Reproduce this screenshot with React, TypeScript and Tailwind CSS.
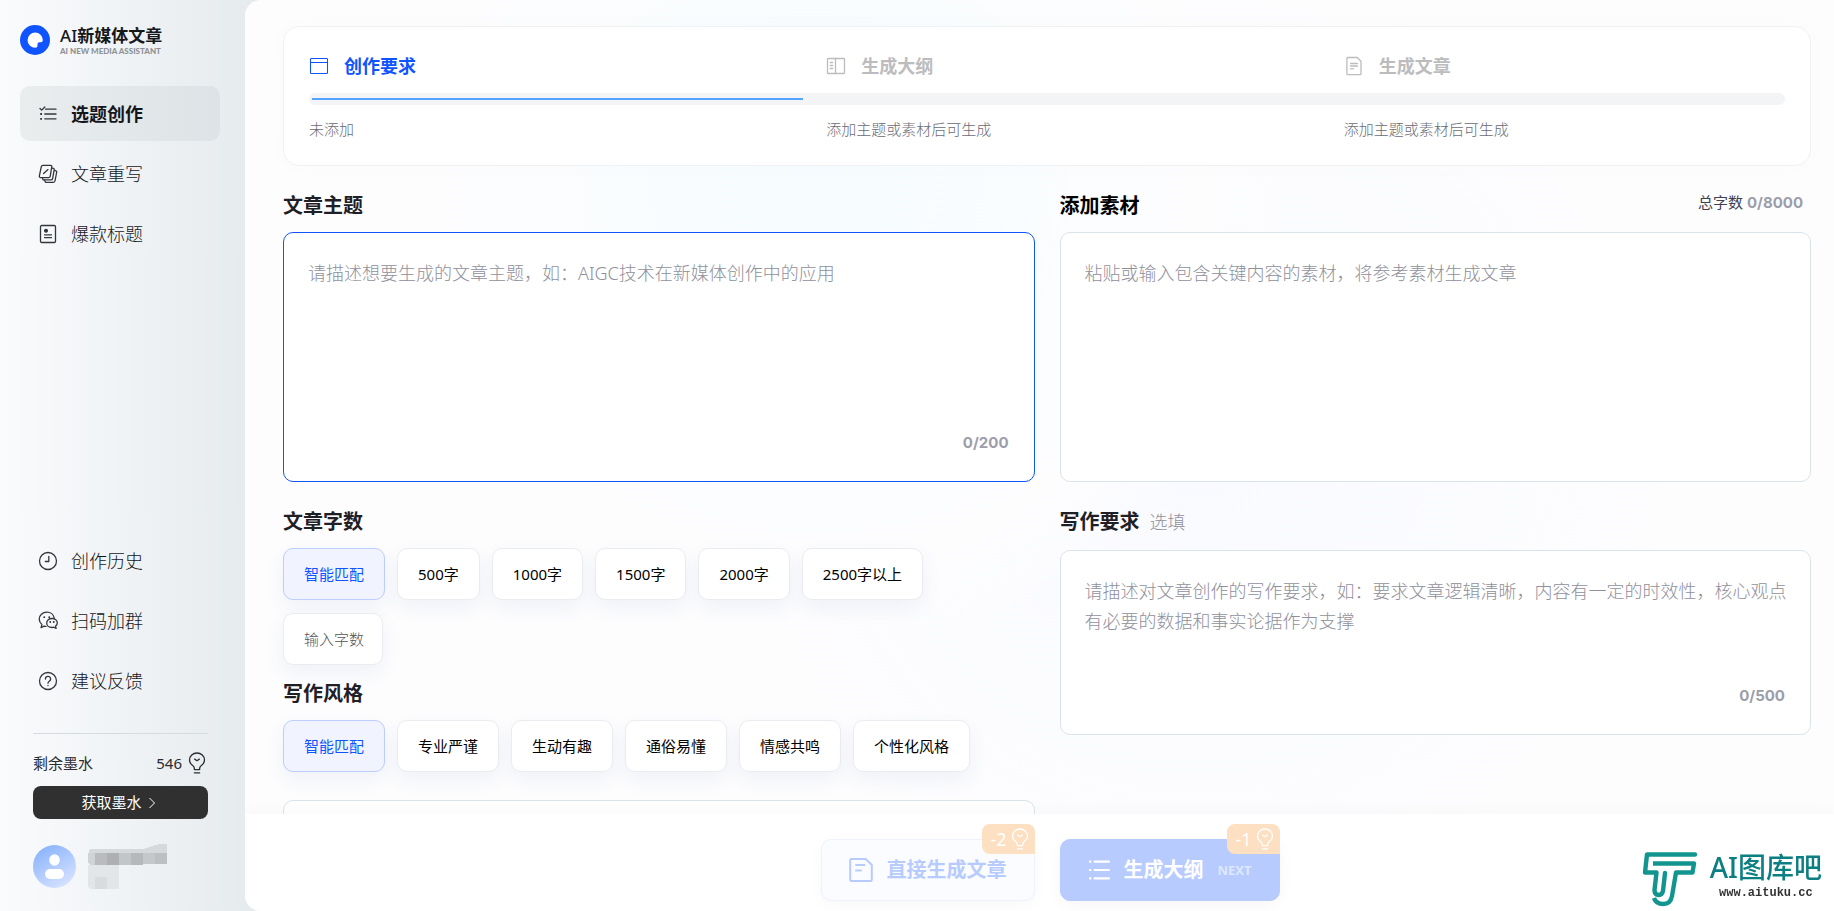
import { useState } from "react";
import type { ReactNode } from "react";
import clsx from "clsx";

type IconProps = { className?: string };

const Svg = ({
  className,
  box = 20,
  width = 1.3,
  children,
}: IconProps & { box?: number; width?: number; children: ReactNode }) => (
  <svg
    viewBox={`0 0 ${box} ${box}`}
    fill="none"
    stroke="currentColor"
    strokeWidth={width}
    strokeLinecap="round"
    strokeLinejoin="round"
    aria-hidden="true"
    className={className}
  >
    {children}
  </svg>
);

const ChecklistIcon = ({ className }: IconProps) => (
  <Svg className={className}>
    <path d="M2 4.5l1.7 1.6L6.8 3M7.5 5.2H18M6.8 10H18M6.8 14.8H18" />
    <path d="M2.200 10h1.800M2.200 14.800h1.800" strokeWidth="1.8" strokeLinecap="butt" />
  </Svg>
);

const RewriteIcon = ({ className }: IconProps) => (
  <Svg className={className}>
    <path d="M5 1.300h7.600a1.200 1.200 0 0 1 1.200 1.400l-1.600 9.600a1.600 1.600 0 0 1-1.600 1.300H2.500a1.200 1.200 0 0 1-1.200-1.400l2-9.600A1.700 1.700 0 0 1 5 1.300z" />
    <path d="M10 5.600L5.600 9.600" />
    <path d="M14.200 4.200l1.200.2a1 1 0 0 1 .8 1.200l-1.600 9a1.600 1.600 0 0 1-1.600 1.300H5.200l-.8-2" />
    <path d="M16.800 6.500l1.100.3a1 1 0 0 1 .8 1.200l-1.700 9a1.600 1.600 0 0 1-1.600 1.300H7.500l-.9-2" />
  </Svg>
);

const TitleIcon = ({ className }: IconProps) => (
  <Svg className={className}>
    <rect x="2.5" y="1.5" width="15" height="17" rx="1.2" />
    <path d="M6.5 10.800h7M6.5 13.600h7" />
    <circle cx="8" cy="6.8" r="1.4" fill="currentColor" />
  </Svg>
);

const ClockIcon = ({ className }: IconProps) => (
  <Svg className={className}>
    <circle cx="10" cy="10" r="8.5" />
    <path d="M10.8 5.5v5H7.3" />
  </Svg>
);

const WechatIcon = ({ className }: IconProps) => (
  <Svg className={className}>
    <path d="M16.300 7.200A7.500 7.500 0 0 0 8.800 1.200C4.600 1.200 1.200 4.300 1.200 8.100c0 2.200 1 4 2.700 5.300l-.8 3.300 2.900-1.600c.7.200 1.300.3 2 .3" />
    <path d="M14 7.500c-3 0-5.300 2-5.300 4.500s2.300 4.500 5.300 4.500c.7 0 1.300-.1 1.900-.3l2.200 1.200-.5-2.300c1-.8 1.700-1.900 1.700-3.100 0-2.500-2.300-4.500-5.300-4.500z" />
    <path d="M6.200 6.200h.1M11.200 6.200h.1M12.200 11h.1M15.700 11h.1" strokeWidth="1.8" />
  </Svg>
);

const HelpIcon = ({ className }: IconProps) => (
  <Svg className={className}>
    <circle cx="10" cy="10" r="8.5" />
    <path d="M7.400 8a2.600 2.600 0 1 1 3.900 2.200c-.8.500-1.300.9-1.300 2M10 14.400v.2" />
  </Svg>
);

const BulbIcon = ({ className }: IconProps) => (
  <Svg className={className} width={1.2}>
    <path d="M7.600 16v-1.200c0-1.200-.8-1.900-1.800-2.700a6.200 6.200 0 0 1-2.600-4.900a6.800 6.300 0 0 1 13.600 0a6.200 6.200 0 0 1-2.600 4.900c-1 .8-1.800 1.500-1.800 2.700V16z" />
    <path d="M7.600 18.900h4.800M7.900 6.500L10 7.900l2.100-1.400" />
  </Svg>
);

const WindowIcon = ({ className }: IconProps) => (
  <Svg className={className} width={1.1}>
    <rect x="1.5" y="2.5" width="17" height="15" rx="0.8" />
    <path d="M1.5 6.500h17" />
  </Svg>
);

const OutlineIcon = ({ className }: IconProps) => (
  <Svg className={className}>
    <rect x="1.5" y="2.5" width="17" height="15" rx="0.8" />
    <path d="M9.500 2.500v15M4.200 6.500h2.500M4.200 9.500h2.500M4.200 12.500h2.500" />
  </Svg>
);

const DocIcon = ({ className }: IconProps) => (
  <Svg className={className}>
    <path d="M3.800 1.500h9.400l3.800 3.800v12.400a.9.900 0 0 1-.9.900H3.800a.9.900 0 0 1-.9-.9V2.400a.9.900 0 0 1 .9-.9z" />
    <path d="M6.500 7.500h7M6.500 10h7M6.500 12.800h3" />
  </Svg>
);

const ArticleIcon = ({ className }: IconProps) => (
  <Svg className={className} box={24} width={2}>
    <path d="M2.500 1h14.200L22.800 7v14.800a1.200 1.200 0 0 1-1.200 1.200H2.400a1.200 1.200 0 0 1-1.200-1.200V2.200A1.200 1.200 0 0 1 2.500 1z" />
    <path d="M7 7h8.500M7 12.500h5" />
  </Svg>
);

const ListIcon = ({ className }: IconProps) => (
  <Svg className={className} box={20} width={2}>
    <path d="M6 2.300h13M6 10h13M6 17.700h13" />
    <path d="M1 2.300h2M1 10h2M1 17.700h2" strokeLinecap="butt" />
  </Svg>
);

const LogoMark = () => (
  <svg viewBox="0 0 30 30" className="size-[30px]" aria-hidden="true">
    <circle cx="15" cy="15" r="15" fill="#0f54ff" />
    <path
      d="M15.200 7.500a7.600 7.600 0 0 1 7.600 7.600c0 1.500-.8 2.200-2 2.200h-1.300c-1.400 0-2 .7-2 2v1.300c0 1.400-.8 2.200-2.300 2.200a7.600 7.600 0 0 1 0-15.300z"
      fill="#fff"
    />
  </svg>
);

const navTop = [
  { label: "选题创作", Icon: ChecklistIcon },
  { label: "文章重写", Icon: RewriteIcon },
  { label: "爆款标题", Icon: TitleIcon },
];

const navBottom = [
  { label: "创作历史", Icon: ClockIcon },
  { label: "扫码加群", Icon: WechatIcon },
  { label: "建议反馈", Icon: HelpIcon },
];

const steps = [
  { title: "创作要求", note: "未添加", Icon: WindowIcon },
  { title: "生成大纲", note: "添加主题或素材后可生成", Icon: OutlineIcon },
  { title: "生成文章", note: "添加主题或素材后可生成", Icon: DocIcon },
];

const lengths = ["智能匹配", "500字", "1000字", "1500字", "2000字", "2500字以上"];
const tones = ["智能匹配", "专业严谨", "生动有趣", "通俗易懂", "情感共鸣", "个性化风格"];

const NavItem = ({
  label,
  Icon,
  active,
}: {
  label: string;
  Icon: (props: IconProps) => ReactNode;
  active?: boolean;
}) => (
  <a
    href="#"
    className={clsx(
      "flex h-[55px] items-center gap-[13px] rounded-[10px] pl-[18px] text-lg text-[#15161b]",
      active ? "bg-linear-to-r from-[#e9edee] to-[#dde3e6] font-bold" : "font-light",
    )}
  >
    <Icon className="size-5 text-[#33363b]" />
    {label}
  </a>
);

const Chips = ({
  items,
  value,
  onChange,
  children,
}: {
  items: string[];
  value: string;
  onChange: (item: string) => void;
  children?: ReactNode;
}) => (
  <div className="flex flex-wrap gap-x-3 gap-y-[13px]">
    {items.map((item) => (
      <button
        key={item}
        type="button"
        onClick={() => onChange(item)}
        className={clsx(
          "h-[52px] rounded-[10px] border px-5 text-[15px] shadow-[0_8px_20px_rgba(60,90,160,0.07)]",
          item === value
            ? "border-[#bccdff] bg-[#f1f4ff] text-[#0f54ff]"
            : "border-[#ebecef] bg-white text-black",
        )}
      >
        {item}
      </button>
    ))}
    {children}
  </div>
);

const TextBox = ({
  id,
  max,
  placeholder,
  focused,
  className,
}: {
  id: string;
  max?: number;
  placeholder: string;
  focused?: boolean;
  className: string;
}) => {
  const [text, setText] = useState("");

  return (
    <div
      className={clsx(
        "relative rounded-[10px] border bg-white",
        focused ? "border-[#0f54ff]" : "border-[#dbe3ea]",
        className,
      )}
    >
      <textarea
        id={id}
        value={text}
        maxLength={max}
        onChange={(e) => setText(e.target.value)}
        placeholder={placeholder}
        className="block size-full resize-none bg-transparent py-[25px] pr-4 pl-6 text-lg/[30px] font-light outline-none placeholder:text-[#8f909c]"
      />
      {max && (
        <span className="absolute right-[25px] bottom-7 font-[Inter] text-[15px]/5 font-bold text-[#9c9daa]">
          {text.length}/{max}
        </span>
      )}
    </div>
  );
};

const CostBadge = ({ cost }: { cost: number }) => (
  <span className="absolute -top-4 -right-px flex h-[30px] items-center gap-0.5 rounded-lg rounded-br-none bg-[#fddfc1] pr-1 pl-2 text-lg font-normal text-white">
    -{cost}
    <BulbIcon className="size-[22px]" />
  </span>
);

const Sidebar = () => (
  <aside className="flex w-[245px] shrink-0 flex-col pr-[25px] pb-[22px] pl-5">
    <div className="mt-[25px] flex items-center gap-2.5">
      <LogoMark />
      <div>
        <p className="text-[17px]/[22px] font-bold text-[#16181c]">
          <span className="font-medium">AI</span>新媒体文章
        </p>
        <p className="font-[Lato] text-[8px]/[8px] font-black text-[#8e9296]">
          AI NEW MEDIA ASSISTANT
        </p>
      </div>
    </div>
    <nav className="mt-[31px] flex flex-col gap-[5px]">
      {navTop.map((item, i) => (
        <NavItem key={item.label} {...item} active={i === 0} />
      ))}
    </nav>
    <nav className="mt-auto flex flex-col gap-[5px]">
      {navBottom.map((item) => (
        <NavItem key={item.label} {...item} />
      ))}
    </nav>
    <div className="mt-[25px] mr-3 ml-[13px] border-t border-[#d5dbdf] pt-4">
      <div className="flex items-center justify-between text-[15px]/[26px] text-[#2a2c31]">
        <span>剩余墨水</span>
        <span className="flex items-center gap-1">
          546
          <BulbIcon className="size-[22px]" />
        </span>
      </div>
      <button
        type="button"
        className="mt-2.5 flex h-[33px] w-full items-center justify-center gap-1.5 rounded-lg bg-[#303030] pr-1 text-[15px] text-white"
      >
        获取墨水
        <svg viewBox="0 0 8 12" className="h-3 w-2" fill="none" stroke="currentColor" aria-hidden="true">
          <path d="M1.5 1l5 5-5 5" />
        </svg>
      </button>
      <div className="mt-[25px] flex items-center gap-3">
        <svg viewBox="0 0 43 43" className="size-[43px]" aria-hidden="true">
          <defs>
            <linearGradient id="avatar" x1="0" y1="0" x2="0.6" y2="1">
              <stop stopColor="#80aefc" />
              <stop offset="1" stopColor="#d3e0ff" />
            </linearGradient>
          </defs>
          <circle cx="21.5" cy="21.5" r="21.5" fill="url(#avatar)" />
          <ellipse cx="21.5" cy="15" rx="5.3" ry="5.8" fill="#fff" />
          <rect x="12" y="24" width="19" height="10" rx="5" fill="#fff" />
        </svg>
        {/* pixelated user name */}
        <svg viewBox="0 0 79 45" className="h-[45px] w-[79px]" shapeRendering="crispEdges" aria-hidden="true">
          <path d="M2 5h53l12-4 5-1h7v10H0z" fill="#d5d9db" />
          <path d="M0 9h7v12H2L0 18z" fill="#d0d4d6" />
          <path d="M7 9h12v12H7z" fill="#b9bbbf" />
          <path d="M19 9h12v12H19z" fill="#aeafb3" />
          <path d="M31 9h12v12H31z" fill="#c3c6c8" />
          <path d="M43 9h12v12H43z" fill="#b6b9bc" />
          <path d="M55 9h12v11H55z" fill="#c4c8ca" />
          <path d="M67 9h12v11H67z" fill="#bcc0c2" />
          <path d="M0 21h31v24H2l-2-3z" fill="#e2e6e8" />
          <path d="M7 33h12v12H7z" fill="#d9dcdf" />
        </svg>
      </div>
    </div>
  </aside>
);

const StepCard = () => (
  <section className="rounded-2xl border border-[#f0f1f2] bg-white px-[25px] pt-[21px] pb-[23px] shadow-[0_0_30px_rgba(0,0,0,0.015)]">
    <ol className="grid grid-cols-3 gap-x-[76px]">
      {steps.map(({ title, Icon }, i) => (
        <li
          key={title}
          className={clsx(
            "flex items-center gap-[15px] text-lg/9 font-bold",
            i === 0 ? "text-[#0f54ff]" : "text-[#bcbcbe]",
          )}
        >
          <Icon className="size-5" />
          {title}
        </li>
      ))}
    </ol>
    <div className="mt-[9px] flex h-3 items-center rounded-md bg-[#f3f4f6] pl-[3px]">
      <div className="h-0.5 w-1/3 bg-[#55a5ff]" />
    </div>
    <div className="mt-[11px] grid grid-cols-3 gap-x-[76px] text-[15px]/[26px] font-light text-[#6a6b76]">
      {steps.map(({ title, note }) => (
        <span key={title}>{note}</span>
      ))}
    </div>
  </section>
);

const Watermark = () => (
  <div className="pointer-events-none fixed right-3 bottom-[3px] z-20 flex items-start gap-3">
    <svg viewBox="0 0 56 58" className="h-[58px] w-14" fill="none" aria-hidden="true">
      <g stroke="#12958e" strokeWidth="4.4" strokeLinejoin="round">
        <path d="M53 4.500H5L3 22.500H14.500L12.500 40c0 6 7 7 8.500 1L23 23" strokeLinecap="round" />
        <path d="M11 13.500H52L50.500 22.500H34L30 46c-1 6-5 8-9 8-5 0-8-3-9-6" />
      </g>
    </svg>
    <div className="flex flex-col items-center">
      <span className="text-[28px]/[35px] font-medium text-[#0b7f82]">AI图库吧</span>
      <span className="font-['Liberation_Mono'] text-xs/4 font-bold text-[#333]">www.aituku.cc</span>
    </div>
  </div>
);

const App = () => {
  const [length, setLength] = useState<string>("智能匹配");
  const [tone, setTone] = useState<string>("智能匹配");

  return (
    <div className="flex h-screen overflow-hidden bg-linear-to-r from-[#fafbfd] to-[#e6ebee] to-[245px] font-['Noto_Sans','Noto_Sans_CJK_SC',sans-serif]">
      <Sidebar />
      <main className="flex min-w-0 flex-1 flex-col overflow-hidden rounded-l-2xl bg-white">
        <div className="min-h-0 flex-1 overflow-hidden bg-[radial-gradient(circle_at_36%_22%,#f6fcff_0,#fdfdfe_32%,transparent_40%),radial-gradient(circle_at_60%_55%,#f9faff_0,#fdfdfe_45%)] pt-[26px] pr-[23px] pl-[38px]">
          <StepCard />
          <div className="mt-[25px] grid grid-cols-2 gap-x-[25px]">
            <div>
              <label htmlFor="topic" className="mb-[11px] block text-xl/[30px] font-bold text-[#1f2026]">
                文章主题
              </label>
              <TextBox
                id="topic"
                max={200}
                focused
                placeholder="请描述想要生成的文章主题，如：AIGC技术在新媒体创作中的应用"
                className="h-[250px]"
              />
              <h2 className="mt-[25px] mb-[11px] text-xl/[30px] font-bold text-[#1f2026]">文章字数</h2>
              <Chips items={lengths} value={length} onChange={setLength}>
                <input
                  aria-label="输入字数"
                  placeholder="输入字数"
                  className="h-[52px] w-[100px] rounded-[10px] border border-[#ebecef] bg-white pl-5 text-[15px] font-light shadow-[0_8px_20px_rgba(60,90,160,0.07)] outline-none placeholder:text-[#555]"
                />
              </Chips>
              <h2 className="mt-3.5 mb-[11px] text-xl/[30px] font-bold text-[#1f2026]">写作风格</h2>
              <Chips items={tones} value={tone} onChange={setTone} />
              <div className="mt-7 h-40 rounded-[10px] border border-[#dbe3ea] bg-white" />
            </div>
            <div>
              <div className="mb-[11px] flex justify-between">
                <label htmlFor="material" className="text-xl/[30px] font-bold text-black">
                  添加素材
                </label>
                <span className="mr-2 text-[15px]/[22px] text-[#3f4050]">
                  总字数 <span className="font-[Inter] font-bold text-[#9c9daa]">0/8000</span>
                </span>
              </div>
              <TextBox
                id="material"
                placeholder="粘贴或输入包含关键内容的素材，将参考素材生成文章"
                className="h-[250px]"
              />
              <label htmlFor="demand" className="mt-[25px] mb-[13px] block text-xl/[30px] font-bold text-[#1f2026]">
                写作要求
                <span className="ml-2.5 text-lg/[30px] font-light text-[#8f909c]">选填</span>
              </label>
              <TextBox
                id="demand"
                max={500}
                placeholder="请描述对文章创作的写作要求，如：要求文章逻辑清晰，内容有一定的时效性，核心观点有必要的数据和事实论据作为支撑"
                className="h-[185px]"
              />
            </div>
          </div>
        </div>
        <footer className="z-10 grid h-[97px] shrink-0 grid-cols-2 items-start gap-x-[25px] bg-white pt-[25px] pr-[23px] pl-[38px] shadow-[0_-4px_16px_rgba(0,0,0,0.025)]">
          <button
            type="button"
            className="relative flex h-[62px] items-center gap-3.5 justify-self-end rounded-[10px] border border-[#eef2ff] bg-[#fafcff] px-[27px] text-xl font-bold text-[#b7cbff] shadow-[0_4px_16px_rgba(0,0,0,0.03)]"
          >
            <ArticleIcon className="size-6" />
            直接生成文章
            <CostBadge cost={2} />
          </button>
          <button
            type="button"
            className="relative flex h-[62px] items-center gap-3.5 justify-self-start rounded-[10px] border border-[#b7cbff] bg-[#b7cbff] px-[27px] text-xl font-bold text-white shadow-[0_4px_16px_rgba(0,0,0,0.04)]"
          >
            <ListIcon className="size-[22px]" />
            生成大纲
            <span className="text-[13px] text-[#dde7ff]">NEXT</span>
            <CostBadge cost={1} />
          </button>
        </footer>
      </main>
      <Watermark />
    </div>
  );
};

export default App;
